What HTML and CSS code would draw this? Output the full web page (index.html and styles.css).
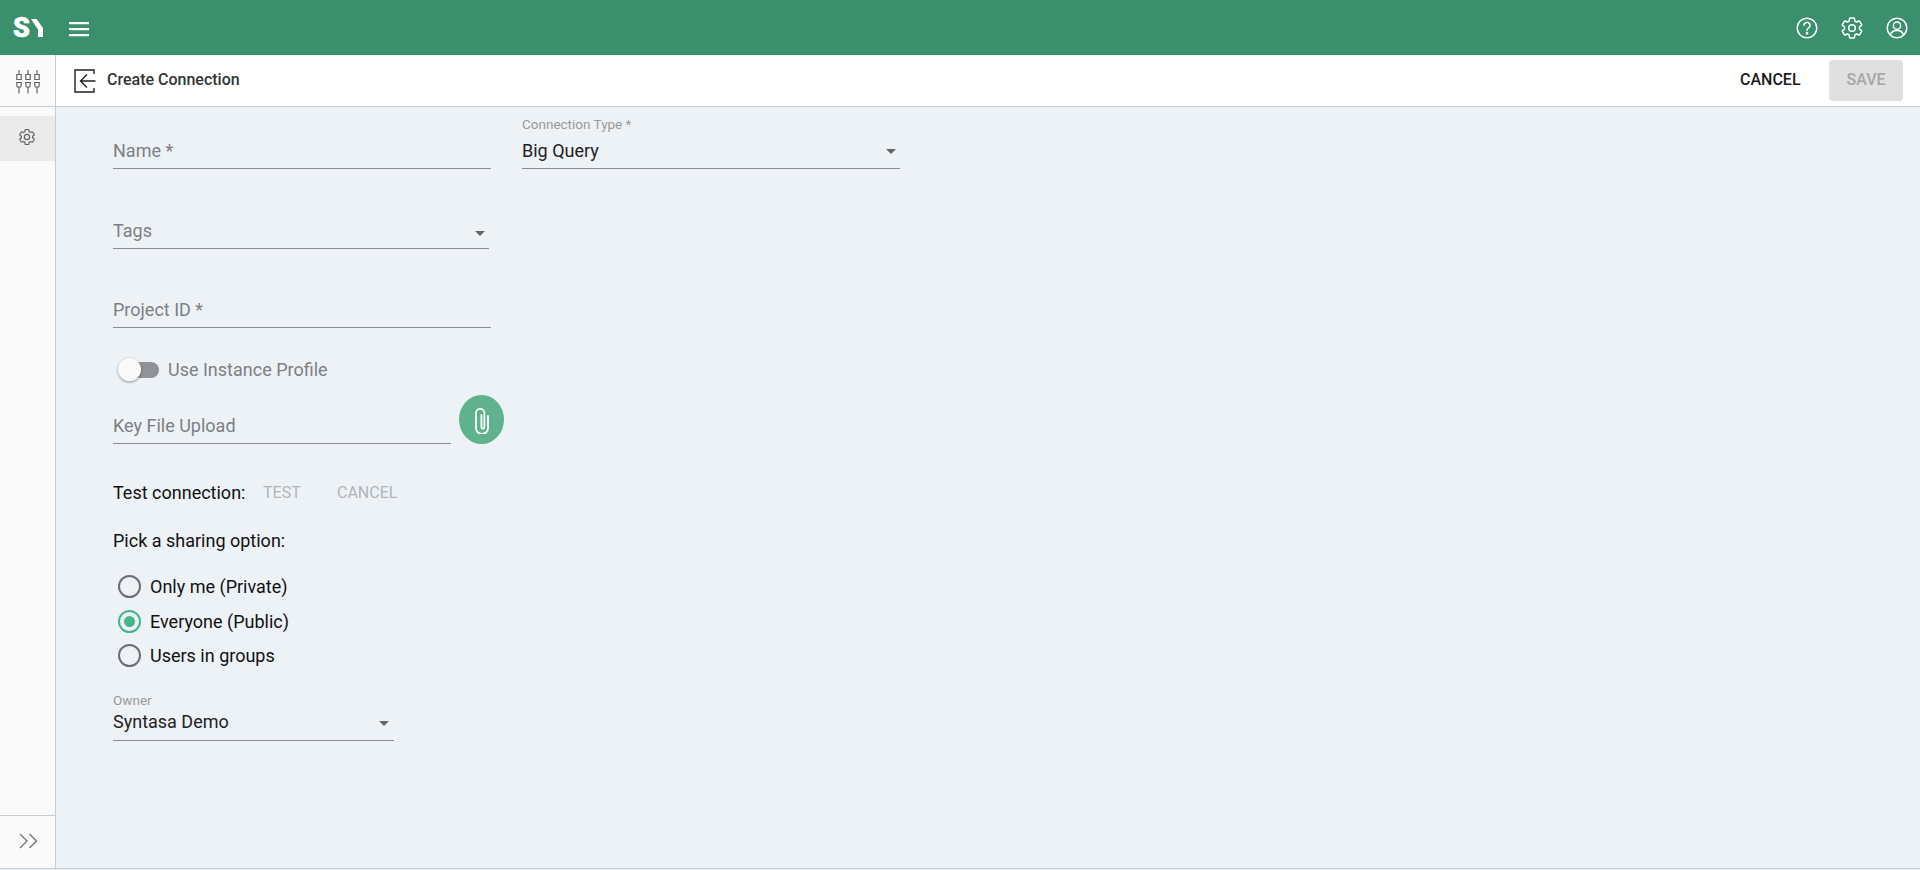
FILE: index.html
```html
<!DOCTYPE html>
<html lang="en">
<head>
<meta charset="utf-8">
<title>Create Connection</title>
<link rel="stylesheet" href="styles.css">
</head>
<body>
<header class="topbar">
  <div class="brand">
    <span class="logo">S<svg class="logo-y" width="12" height="18" viewBox="0 0 12 18"><path d="M0 0h5.500l6.500 9v9H7v-7.500z" fill="#fff"/></svg></span>
    <svg class="menu" width="24" height="24" viewBox="0 0 24 24"><path d="M2 6h20v2.200H2zM2 12h20v2.200H2zM2 18h20v2.200H2z" fill="#fff"/></svg>
  </div>
  <div class="top-icons">
    <svg width="24" height="24" viewBox="0 0 24 24" fill="none" stroke="#fff" stroke-width="1.500"><circle cx="12" cy="12" r="9.800"/><path d="M9 9.300a3 3 0 1 1 4.600 2.600c-1 .6-1.600 1.200-1.600 2.600" stroke-linecap="round"/><circle cx="12" cy="17.300" r=".6" fill="#fff"/></svg>
    <svg width="24" height="24" viewBox="0 0 24 24" fill="none" stroke="#fff" stroke-width="1.500" stroke-linejoin="round"><circle cx="12" cy="12" r="3.300"/><path d="M19.430 12.980c.04-.32.07-.64.07-.98 0-.34-.03-.66-.07-.98l2.110-1.650c.19-.15.24-.42.12-.64l-2-3.460c-.09-.16-.26-.25-.44-.25-.06 0-.12.01-.17.03l-2.490 1c-.52-.4-1.080-.73-1.690-.98l-.38-2.650C14.460 2.180 14.250 2 14 2h-4c-.25 0-.46.18-.49.42l-.38 2.650c-.61.25-1.170.59-1.690.98l-2.490-1c-.06-.02-.12-.03-.18-.03-.17 0-.34.09-.43.25l-2 3.460c-.13.22-.07.49.12.64l2.110 1.650c-.04.32-.07.65-.07.98 0 .33.03.66.07.98l-2.110 1.650c-.19.15-.24.42-.12.64l2 3.460c.09.16.26.25.44.25.06 0 .12-.01.17-.03l2.490-1c.52.4 1.080.73 1.690.98l.38 2.650c.03.24.24.42.49.42h4c.25 0 .46-.18.49-.42l.38-2.650c.61-.25 1.170-.59 1.690-.98l2.490 1c.06.02.12.03.18.03.17 0 .34-.09.43-.25l2-3.460c.12-.22.07-.49-.12-.64l-2.110-1.650z"/></svg>
    <svg width="24" height="24" viewBox="0 0 24 24" fill="none" stroke="#fff" stroke-width="1.500"><circle cx="12" cy="12" r="9.800"/><circle cx="12" cy="9.700" r="3.600"/><path d="M5.500 19.200c.6-3.200 3-4.800 6.500-4.800s5.900 1.600 6.500 4.800"/></svg>
  </div>
</header>
<div class="shell">
  <aside class="sidebar">
    <div class="side-top">
      <svg width="26" height="24" viewBox="0 0 26 24" fill="none" stroke="#666" stroke-width="1.200"><path d="M4 0v4.500M4 17v6.500M13 0v4.500M13 17v6.500M22 0v4.500M22 17v6.500"/><path d="M1.800 4.500h4.400v5H1.800zM10.800 4.500h4.400v5h-4.400zM19.800 4.500h4.400v5h-4.400z"/><path d="M1.600 12.500h4.800l-.6 4.500H2.200zM10.600 12.500h4.800l-.6 4.500h-3.600zM19.600 12.500h4.800l-.6 4.500h-3.600z"/></svg>
    </div>
    <div class="side-item">
      <svg width="18" height="18" viewBox="0 0 24 24" fill="none" stroke="#666" stroke-width="1.600" stroke-linejoin="round"><circle cx="12" cy="12" r="3.500"/><path d="M19.430 12.980c.04-.32.07-.64.07-.98 0-.34-.03-.66-.07-.98l2.110-1.650c.19-.15.24-.42.12-.64l-2-3.460c-.09-.16-.26-.25-.44-.25-.06 0-.12.01-.17.03l-2.490 1c-.52-.4-1.080-.73-1.690-.98l-.38-2.650C14.460 2.180 14.250 2 14 2h-4c-.25 0-.46.18-.49.42l-.38 2.650c-.61.25-1.170.59-1.690.98l-2.490-1c-.06-.02-.12-.03-.18-.03-.17 0-.34.09-.43.25l-2 3.460c-.13.22-.07.49.12.64l2.110 1.650c-.04.32-.07.65-.07.98 0 .33.03.66.07.98l-2.110 1.650c-.19.15-.24.42-.12.64l2 3.460c.09.16.26.25.44.25.06 0 .12-.01.17-.03l2.490-1c.52.4 1.080.73 1.690.98l.38 2.650c.03.24.24.42.49.42h4c.25 0 .46-.18.49-.42l.38-2.650c.61-.25 1.170-.59 1.690-.98l2.490 1c.06.02.12.03.18.03.17 0 .34-.09.43-.25l2-3.460c.12-.22.07-.49-.12-.64l-2.110-1.650z"/></svg>
    </div>
    <div class="side-bottom">
      <svg width="20" height="16" viewBox="0 0 20 16" fill="none" stroke="#777" stroke-width="1.400"><path d="M1 1l7 7-7 7M10.500 1l7 7-7 7"/></svg>
    </div>
  </aside>
  <div class="main">
    <div class="subbar">
      <div class="title-group">
        <svg width="22" height="24" viewBox="0 0 22 24" fill="none" stroke="#222" stroke-width="1.400"><path d="M20 5V1H1v22h19v-4"/><path d="M21.500 12H7M13 5.500L6.500 12l6.500 6.500"/></svg>
        <span class="title">Create Connection</span>
      </div>
      <div class="actions">
        <span class="btn-cancel">CANCEL</span>
        <span class="btn-save">SAVE</span>
      </div>
    </div>
    <main class="form">
      <div class="row-top">
        <div class="field field-name"><span class="placeholder">Name *</span></div>
        <div class="field field-type">
          <span class="float-label">Connection Type *</span>
          <span class="value">Big Query</span><i class="caret"></i>
        </div>
      </div>
      <div class="field field-tags"><span class="placeholder">Tags</span><i class="caret"></i></div>
      <div class="field field-project"><span class="placeholder">Project ID *</span></div>
      <div class="toggle-row">
        <span class="toggle"><span class="track"></span><span class="knob"></span></span>
        <span class="toggle-label">Use Instance Profile</span>
      </div>
      <div class="upload-row">
        <div class="field field-key"><span class="placeholder">Key File Upload</span></div>
        <span class="fab">
          <svg width="16" height="28" viewBox="0 0 16 28" fill="none" stroke="#fff" stroke-width="1.800" stroke-linecap="round"><path d="M14 10v12a6 6 0 0 1-12 0V7a4.200 4.200 0 0 1 8.400 0v14a1.500 1.500 0 0 1-3 0V9"/></svg>
        </span>
      </div>
      <div class="test-row">
        <span class="test-label">Test connection:</span>
        <span class="link-test">TEST</span>
        <span class="link-cancel">CANCEL</span>
      </div>
      <div class="share-label">Pick a sharing option:</div>
      <div class="radios">
        <div class="radio-row"><span class="radio"></span>Only me (Private)</div>
        <div class="radio-row"><span class="radio checked"></span>Everyone (Public)</div>
        <div class="radio-row"><span class="radio"></span>Users in groups</div>
      </div>
      <div class="field field-owner">
        <span class="float-label">Owner</span>
        <span class="value">Syntasa Demo</span><i class="caret"></i>
      </div>
    </main>
  </div>
</div>
</body>
</html>
```
FILE: styles.css
```css
* { box-sizing: border-box; }
html, body { margin: 0; height: 870px; overflow: hidden; }
body { font-family: Roboto, "Liberation Sans", sans-serif; font-size: 18px; background: #edf2f7; color: #111; display: flex; flex-direction: column; }
.topbar { height: 55px; background: #3a8f6c; display: flex; align-items: center; justify-content: space-between; flex: none; }
.brand { display: flex; align-items: center; padding-left: 13px; margin-top: 1px; }
.logo { display: flex; align-items: center; width: 54px; color: #fff; font-size: 27px; font-weight: 900; line-height: 24px; -webkit-text-stroke: .5px #fff; }
.logo-y { margin-left: 1px; }
.menu { display: block; }
.top-icons { display: flex; gap: 21px; padding-right: 11px; margin-top: 1px; }
.top-icons svg { display: block; }
.shell { flex: none; height: 814px; display: flex; border-bottom: 1px solid #bfcad3; }
.sidebar { width: 56px; flex: none; background: #fafafa; border-right: 1px solid #c5ced6; display: flex; flex-direction: column; }
.side-top { height: 52px; border-bottom: 1px solid #c5ced6; display: flex; align-items: center; justify-content: center; padding-top: 2px; }
.side-item { height: 45px; margin-top: 9px; background: #ebebeb; display: flex; align-items: center; justify-content: center; padding: 0 2px 4px 0; }
.side-bottom { margin-top: auto; height: 53px; border-top: 1px solid #c5ced6; display: flex; align-items: center; justify-content: center; padding: 0 0 2px 3px; }
.main { flex: 1; min-width: 0; display: flex; flex-direction: column; }
.subbar { height: 52px; background: #fff; border-bottom: 1px solid #c5ced6; display: flex; align-items: center; justify-content: space-between; padding: 0 17px 0 18px; flex: none; }
.title-group { display: flex; align-items: center; gap: 11px; }
.title { font-size: 16px; font-weight: 500; color: #333; padding-bottom: 2px; }
.actions { display: flex; align-items: center; gap: 29px; }
.btn-cancel { font-size: 16px; font-weight: 500; color: #1a1a1a; width: 60px; text-align: center; padding-bottom: 2px; }
.btn-save { width: 74px; height: 41px; background: #e0e0e0; border-radius: 4px; color: #a6a6a6; font-size: 16px; font-weight: 500; display: flex; align-items: center; justify-content: center; padding-bottom: 2px; }
.form { padding: 0 0 0 57px; flex: 1; }
.field { position: relative; border-bottom: 1px solid #8a8d91; height: 30px; }
.placeholder { display: block; color: #7d7f83; line-height: 26px; }
.value { display: block; line-height: 24px; color: #222; }
.float-label { position: absolute; left: 0; top: -21px; font-size: 13.500px; line-height: 14px; color: #999; white-space: nowrap; }
.caret { position: absolute; right: 4px; top: 11px; border-left: 5px solid transparent; border-right: 5px solid transparent; border-top: 5px solid #666; }
.row-top { display: flex; gap: 31px; padding-top: 31px; }
.field-name, .field-type { width: 378px; height: 31px; }
.field-type .value { padding-top: 1px; }
.field-tags { width: 376px; height: 31px; margin-top: 49px; }
.field-tags .caret { top: 13px; }
.field-project { width: 378px; height: 31px; margin-top: 48px; }
.toggle-row { display: flex; align-items: center; height: 28px; margin-top: 28px; }
.toggle { position: relative; width: 48px; height: 24px; flex: none; margin-left: 5px; }
.track { position: absolute; left: 4px; top: 4px; width: 37px; height: 16px; border-radius: 8px; background: #8f9296; }
.knob { position: absolute; left: 0; top: 0; width: 23px; height: 23px; border-radius: 50%; background: #fafafa; box-shadow: 0 1px 3px rgba(0,0,0,.4); }
.toggle-label { color: #7d7f83; margin-left: 2px; padding-bottom: 2px; }
.upload-row { display: flex; align-items: flex-start; margin-top: 11px; }
.field-key { width: 338px; height: 30px; margin-top: 19px; }
.field-key .placeholder { line-height: 24px; }
.fab { width: 45px; height: 49px; margin-left: 8px; border-radius: 50%; background: #5fb28d; display: flex; align-items: center; justify-content: center; flex: none; }
.test-row { display: flex; align-items: center; height: 20px; margin-top: 38px; }
.test-label { width: 150px; color: #111; }
.link-test, .link-cancel { font-size: 16px; color: #b1b5b9; }
.link-test { width: 74px; }
.share-label { margin-top: 29px; line-height: 20px; }
.radios { margin-top: 24px; display: flex; flex-direction: column; gap: 11.500px; }
.radio-row { display: flex; align-items: center; height: 23px; margin-left: 5px; gap: 9px; }
.radio { width: 23px; height: 23px; border-radius: 50%; border: 2px solid #6b6e72; flex: none; position: relative; }
.radio.checked { border-color: #46b58b; }
.radio.checked::after { content: ""; position: absolute; left: 4px; top: 4px; width: 11px; height: 11px; border-radius: 50%; background: #46b58b; }
.field-owner { width: 281px; height: 31px; margin-top: 43px; }
.field-owner .float-label { top: -17px; }
.field-owner .caret { right: 5px; }
```
